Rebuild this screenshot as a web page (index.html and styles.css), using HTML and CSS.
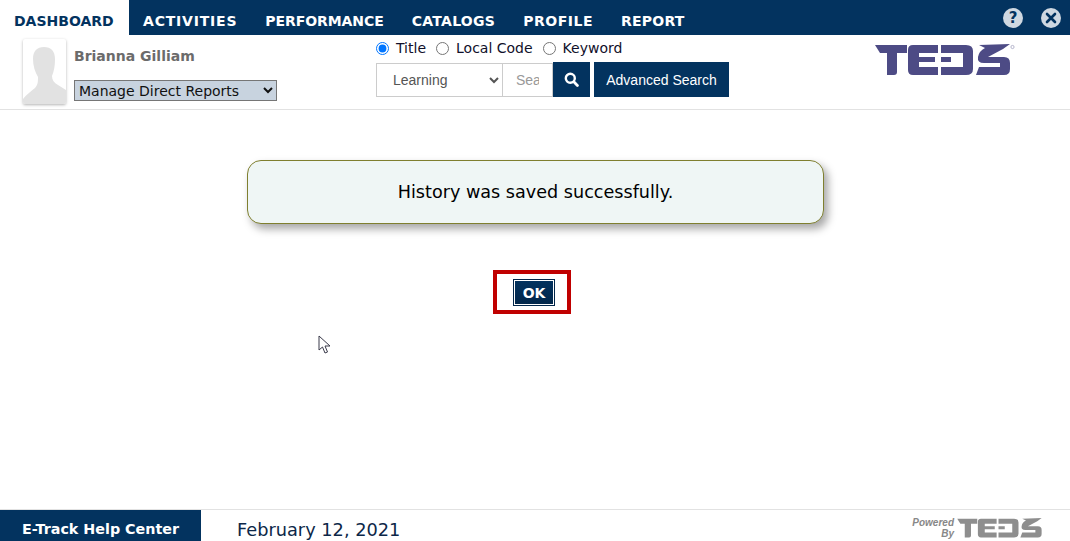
FILE: index.html

```html
<!DOCTYPE html>
<html lang="en">
<head>
    <meta charset="UTF-8">
    <meta name="viewport" content="width=device-width, initial-scale=1.0">
    <title>E-Track - Dashboard</title>
    <link rel="stylesheet" href="styles.css">
</head>
<body>
    <nav class="top-nav">
        <a class="nav-item active" href="#">DASHBOARD</a>
        <a class="nav-item wide-1" href="#">ACTIVITIES</a>
        <a class="nav-item tight" href="#">PERFORMANCE</a>
        <a class="nav-item wide-2" href="#">CATALOGS</a>
        <a class="nav-item wide-3" href="#">PROFILE</a>
        <a class="nav-item wide-4" href="#">REPORT</a>
        <div class="nav-icons">
            <span class="round-icon">?</span>
            <span class="round-icon">
                <svg width="12" height="12" viewBox="0 0 12 12"><path d="M2 2 L10 10 M10 2 L2 10" stroke="#03335f" stroke-width="2.6" stroke-linecap="round"/></svg>
            </span>
        </div>
    </nav>

    <header class="sub-header">
        <div class="avatar">
            <svg width="43" height="65" viewBox="0 0 43 65">
                <path fill="#e2e2e2" d="M21 8 C28 8 32 12 32 20 C32 27 31 32 29 37 C29 41 31 44 35 46 L43 51 L43 65 L0 65 L0 60 C3 56 8 52 12 49 C15 46 15 42 15 38 C12 33 10 27 10 20 C10 12 14 8 21 8 Z"/>
            </svg>
        </div>
        <div class="user-col">
            <div class="user-name">Brianna Gilliam</div>
            <select class="reports-select">
                <option>Manage Direct Reports</option>
            </select>
        </div>
        <div class="search-col">
            <div class="radio-row">
                <label><input type="radio" name="stype" checked> Title</label>
                <label><input type="radio" name="stype"> Local Code</label>
                <label><input type="radio" name="stype"> Keyword</label>
            </div>
            <div class="search-row">
                <select class="cat-select">
                    <option>Learning</option>
                </select>
                <input class="search-input" type="text" placeholder="Search">
                <button class="search-btn" type="button">
                    <svg width="15" height="15" viewBox="0 0 15 15"><circle cx="6.3" cy="6.3" r="4.5" fill="none" stroke="#fff" stroke-width="2.4"/><path d="M9.8 9.8 L13.4 13.4" stroke="#fff" stroke-width="2.8" stroke-linecap="round"/></svg>
                </button>
                <button class="adv-btn" type="button">Advanced Search</button>
            </div>
        </div>
        <svg class="teds-logo" width="140" height="32" viewBox="0 0 140 32">
            <g fill="#4d4b85">
                <path d="M0 1 H32 V9 H22 V28 Q22 31 19 31 H12 V9 H5 Z"/>
                <path d="M38 1 H63 V9 H44 V13 H60 V18 H44 V23 H63 V31 H38 Q33 31 33 26 V6 Q33 1 38 1 Z"/>
                <path d="M66 1 H91 Q98 1 98 7 V25 Q98 31 91 31 H66 V23 H88 V9 H66 Z M66 13 H76 V18 H66 Z"/>
                <path d="M135 0 L128 5 L113 13 H129 Q135 13 135 19 V25 Q135 31 129 31 H101 L104 23 H125 V19 H109 Q102 19 103 13 Q104 7 110 4 L104 1 Z"/>
            </g>
            <circle cx="137.500" cy="3" r="1.600" fill="none" stroke="#9a99b8" stroke-width="0.700"/>
        </svg>
    </header>

    <main class="content">
        <div class="message-box">History was saved successfully.</div>
        <div class="ok-highlight">
            <button class="ok-btn" type="button">OK</button>
        </div>
    </main>

    <footer class="page-footer">
        <a class="help-link" href="#">E-Track Help Center</a>
        <span class="footer-date">February 12, 2021</span>
        <div class="powered">
            <span class="powered-text">Powered<br>By</span>
            <svg width="88" height="20" viewBox="0 0 140 32">
                <g fill="#8e8e8e">
                    <path d="M0 1 H32 V9 H22 V28 Q22 31 19 31 H12 V9 H5 Z"/>
                    <path d="M38 1 H63 V9 H44 V13 H60 V18 H44 V23 H63 V31 H38 Q33 31 33 26 V6 Q33 1 38 1 Z"/>
                    <path d="M66 1 H91 Q98 1 98 7 V25 Q98 31 91 31 H66 V23 H88 V9 H66 Z M66 13 H76 V18 H66 Z"/>
                    <path d="M135 0 L128 5 L113 13 H129 Q135 13 135 19 V25 Q135 31 129 31 H101 L104 23 H125 V19 H109 Q102 19 103 13 Q104 7 110 4 L104 1 Z"/>
                </g>
            </svg>
        </div>
    </footer>

    <!-- mouse pointer from the capture -->
    <svg class="mouse-pointer" width="14" height="20" viewBox="0 0 14 20">
        <path d="M1 1 L1 15 L4.5 12 L7 18 L9.5 17 L7 11 L12 11 Z" fill="#fff" stroke="#3a3a4a" stroke-width="1"/>
    </svg>
</body>
</html>
```

FILE: styles.css

```css
:root {
    --navy: #03335f;
    --line: #e2e2e2;
}
* { box-sizing: border-box; }
html, body {
    height: 100%;
}
body {
    margin: 0;
    display: flex;
    flex-direction: column;
    overflow: hidden;
    background: #fff;
    color: #000;
    font-family: "DejaVu Sans", Verdana, sans-serif;
}
.top-nav {
    display: flex;
    align-items: center;
    height: 35px;
    flex: none;
    background: var(--navy);
}
.nav-item {
    display: flex;
    align-items: center;
    height: 100%;
    padding: 6px 14px 0;
    color: #fff;
    font-size: 14px;
    font-weight: 700;
    text-decoration: none;
}
.nav-item.active {
    width: 129px;
    background: #fff;
    color: var(--navy);
}
/* DejaVu's caps run a bit narrower than the original face on these */
.nav-item.tight { letter-spacing: -0.08px; }
.nav-item.wide-1 { letter-spacing: 0.8px; }
.nav-item.wide-2 { letter-spacing: 0.3px; }
.nav-item.wide-3 { letter-spacing: 0.5px; }
.nav-item.wide-4 { letter-spacing: 0.25px; }
.nav-icons {
    margin-left: auto;
    display: flex;
    gap: 18px;
    padding-right: 9px;
}
.round-icon {
    width: 20px;
    height: 20px;
    border-radius: 50%;
    background: #cfd8e1;
    color: var(--navy);
    font-size: 15px;
    font-weight: 700;
    display: flex;
    align-items: center;
    justify-content: center;
}
.sub-header {
    display: flex;
    flex: none;
    height: 75px;
    padding-left: 23px;
    border-bottom: 1px solid var(--line);
}
.avatar {
    width: 43px;
    height: 65px;
    margin-top: 4px;
    background: #fff;
    box-shadow: 0 1px 3px rgba(0, 0, 0, 0.3);
    border-radius: 2px;
    overflow: hidden;
}
.avatar svg {
    display: block;
}
.user-col {
    width: 203px;
    margin-left: 8px;
    padding-top: 12px;
}
.user-name {
    color: #6b6b6b;
    font-size: 14px;
    font-weight: 700;
    line-height: 18px;
}
.reports-select {
    display: block;
    width: 203px;
    height: 21px;
    margin-top: 15px;
    padding: 0;
    background: #c8d3df;
    border: 1px solid #767676;
    color: #111;
    font-family: inherit;
    font-size: 14px;
}
.search-col {
    margin-left: 99px;
}
.radio-row {
    display: flex;
    gap: 10px;
    height: 27px;
    padding-top: 4px;
    font-size: 14px;
    line-height: 18px;
    color: #10102a;
}
.radio-row label {
    display: flex;
    align-items: center;
    gap: 7px;
    height: 18px;
}
.radio-row input {
    width: 13px;
    height: 13px;
    margin: 0;
}
.search-row {
    display: flex;
}
.cat-select {
    width: 127px;
    height: 34px;
    margin-top: 1px;
    padding: 0 0 0 12px;
    background: #fff;
    border: 1px solid #ccc;
    color: #555;
    font-family: "Liberation Sans", Arial, sans-serif;
    font-size: 14px;
}
.search-input {
    width: 50px;
    height: 34px;
    margin-top: 1px;
    padding: 0 13px;
    border: 1px solid #ccc;
    border-left: none;
    font-family: "Liberation Sans", Arial, sans-serif;
    font-size: 14px;
}
.search-input::placeholder {
    color: #999;
}
.search-btn {
    width: 37px;
    height: 35px;
    padding: 0;
    border: none;
    background: var(--navy);
    display: flex;
    align-items: center;
    justify-content: center;
}
.adv-btn {
    width: 135px;
    height: 35px;
    margin-left: 4px;
    padding: 0;
    border: none;
    background: var(--navy);
    color: #fff;
    font-family: "Liberation Sans", Arial, sans-serif;
    font-size: 14px;
}
.teds-logo {
    margin-left: auto;
    margin-right: 55px;
    margin-top: 9px;
}
.content {
    flex: 1;
    display: flex;
    flex-direction: column;
    align-items: center;
    padding-top: 50px;
    padding-left: 1px;
}
.message-box {
    width: 577px;
    height: 64px;
    display: flex;
    align-items: center;
    justify-content: center;
    background: #eff6f5;
    border: 1px solid #7f7f2f;
    border-radius: 14px;
    box-shadow: 4px 5px 8px rgba(0, 0, 0, 0.35);
    font-size: 17.6px;
}
.ok-highlight {
    width: 78px;
    height: 44px;
    margin-top: 46px;
    margin-right: 7px;
    padding-left: 4px;
    border: 4px solid #c00000;
    display: flex;
    align-items: center;
    justify-content: center;
}
.ok-btn {
    width: 42px;
    height: 27px;
    padding: 1px 0 0;
    background: linear-gradient(#03335f, #02264a);
    border: 1px solid #fff;
    outline: 1px solid #02264a;
    outline-offset: -1px;
    box-shadow: inset 0 0 0 1px #fff;
    color: #fff;
    font-family: "DejaVu Sans", Verdana, sans-serif;
    font-size: 14px;
    font-weight: 700;
}
.page-footer {
    flex: none;
    display: flex;
    align-items: stretch;
    height: 32px;
    border-top: 1px solid var(--line);
}
.help-link {
    width: 201px;
    padding-top: 7px;
    display: flex;
    align-items: center;
    justify-content: center;
    background: var(--navy);
    color: #fff;
    font-size: 14.3px;
    font-weight: 700;
    text-decoration: none;
}
.footer-date {
    margin-left: 36px;
    padding-top: 8px;
    align-self: center;
    color: #0c2748;
    font-size: 17.75px;
}
.powered {
    margin-left: auto;
    margin-right: 25px;
    padding-top: 5px;
    display: flex;
    align-items: center;
    gap: 3px;
}
.powered-text {
    color: #888;
    font-family: "Liberation Sans", Arial, sans-serif;
    font-size: 10px;
    font-style: italic;
    font-weight: 700;
    line-height: 11px;
    text-align: right;
}
.mouse-pointer {
    position: absolute;
    left: 318px;
    top: 335px;
}
```
